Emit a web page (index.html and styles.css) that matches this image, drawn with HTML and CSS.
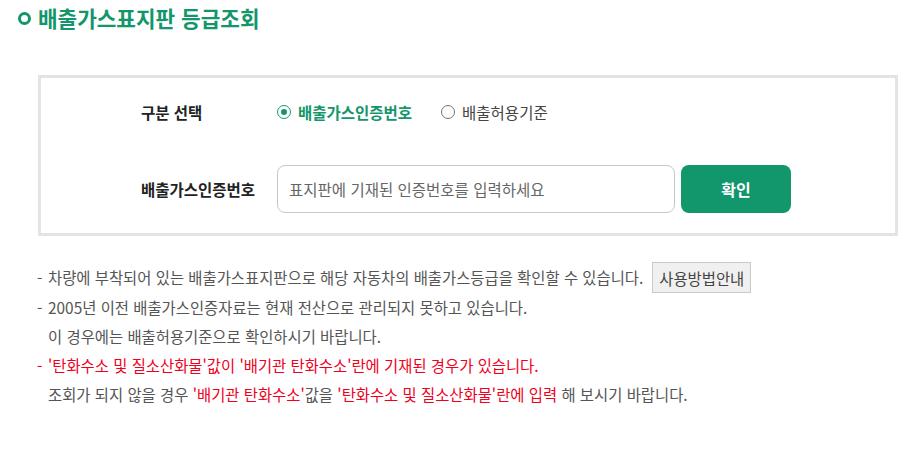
FILE: index.html
```html
<!DOCTYPE html>
<html lang="ko">
<head>
<meta charset="utf-8">
<title>배출가스표지판 등급조회</title>
<link rel="stylesheet" href="styles.css">
</head>
<body>
<div class="page">
  <h2 class="title"><span class="title-dot"></span>배출가스표지판 등급조회</h2>
  <div class="search-box">
    <div class="row row-select">
      <div class="label">구분 선택</div>
      <div class="options">
        <label class="radio checked"><span class="radio-mark"></span>배출가스인증번호</label>
        <label class="radio"><span class="radio-mark"></span>배출허용기준</label>
      </div>
    </div>
    <div class="row row-input">
      <div class="label">배출가스인증번호</div>
      <div class="field">
        <input class="text-input" type="text" placeholder="표지판에 기재된 인증번호를 입력하세요">
        <button class="btn-confirm" type="button">확인</button>
      </div>
    </div>
  </div>
  <ul class="notes">
    <li class="first"><span class="dash">-</span><span>차량에 부착되어 있는 배출가스표지판으로 해당 자동차의 배출가스등급을 확인할 수 있습니다.</span><button class="btn-guide" type="button">사용방법안내</button></li>
    <li><span class="dash">-</span><span>2005년 이전 배출가스인증자료는 현재 전산으로 관리되지 못하고 있습니다.</span></li>
    <li class="cont">이 경우에는 배출허용기준으로 확인하시기 바랍니다.</li>
    <li class="red"><span class="dash">-</span><span>'탄화수소 및 질소산화물'값이 '배기관 탄화수소'란에 기재된 경우가 있습니다.</span></li>
    <li class="cont">조회가 되지 않을 경우 <span class="red">'배기관 탄화수소'</span>값을 <span class="red">'탄화수소 및 질소산화물'란에 입력</span> 해 보시기 바랍니다.</li>
  </ul>
</div>
</body>
</html>
```
FILE: styles.css
```css
* { box-sizing: border-box; }
html, body { margin: 0; padding: 0; background: #fff; }
body {
  font-family: "Noto Sans CJK KR", "Noto Sans", sans-serif;
  color: #555;
  width: 914px;
  height: 456px;
  overflow: hidden;
}
.page { padding: 3px 0 0 18px; }
.title {
  margin: 0;
  display: flex;
  align-items: center;
  font-size: 21.3px;
  font-weight: 700;
  color: #13966b;
  line-height: 30px;
}
.title-dot {
  width: 13px;
  height: 13px;
  border: 3.5px solid #13966b;
  border-radius: 50%;
  margin-right: 7px;
}
.search-box {
  margin: 42px 0 0 20px;
  width: 860px;
  height: 161px;
  border: 3px solid #e3e3e3;
  padding: 20px 0 0 100px;
}
.row { display: flex; align-items: center; }
.row-select { height: 28px; }
.row-input { margin-top: 39px; }
.label {
  width: 136px;
  font-size: 15.5px;
  font-weight: 700;
  color: #222;
}
.options { display: flex; gap: 29px; }
.radio {
  display: flex;
  align-items: center;
  font-size: 15.5px;
  color: #444;
}
.radio.checked { color: #13966b; font-weight: 700; }
.radio-mark {
  width: 14px;
  height: 14px;
  border: 1px solid #777;
  border-radius: 50%;
  margin-right: 7px;
  position: relative;
}
.radio.checked .radio-mark { border: 1.5px solid #13966b; }
.radio.checked .radio-mark::after {
  content: "";
  position: absolute;
  left: 2.5px; top: 2.5px;
  width: 6px; height: 6px;
  border-radius: 50%;
  background: #13966b;
}
.field { display: flex; gap: 6px; }
.text-input {
  width: 398px;
  height: 48px;
  border: 1px solid #c8c8c8;
  border-radius: 8px;
  padding: 0 11px;
  font-family: inherit;
  font-size: 15.5px;
  color: #333;
  outline: none;
}
.text-input::placeholder { color: #666; }
.btn-confirm {
  width: 110px;
  height: 48px;
  border: 0;
  border-radius: 8px;
  background: #12966c;
  color: #fff;
  font-family: inherit;
  font-size: 16px;
  font-weight: 700;
}
.notes {
  list-style: none;
  margin: 26px 0 0 19px;
  padding: 0;
  font-size: 15.4px;
  line-height: 29px;
  color: #555;
}
.notes li { display: flex; align-items: center; white-space: nowrap; }
.notes li.first { height: 31px; }
.dash { width: 11px; }
.notes li.cont { padding-left: 11px; display: block; }
.red { color: #f0001c; }
.btn-guide {
  margin-left: 9px;
  height: 31px;
  padding: 0 6px;
  background: #f0f0f0;
  border: 1px solid #c8c8c8;
  font-family: inherit;
  font-size: 15.4px;
  color: #444;
}
```
